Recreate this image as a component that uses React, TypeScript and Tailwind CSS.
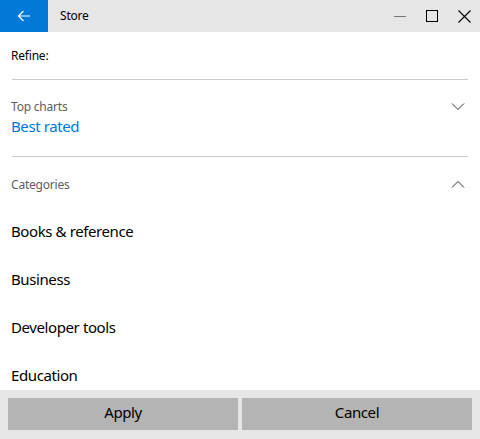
const font = "font-['Segoe_UI','Noto_Sans',sans-serif]";

const categories = ["Books & reference", "Business", "Developer tools", "Education"];

function Chevron({ up }: { up?: boolean }) {
  return (
    <svg width="14" height="8" viewBox="0 0 14 8" className="text-[#333]">
      <path
        d={up ? "M1 7.5L7 1.5L13 7.5" : "M1 0.5L7 6.5L13 0.5"}
        fill="none"
        stroke="currentColor"
        strokeWidth="1"
      />
    </svg>
  );
}

export default function App() {
  return (
    <div className={`${font} w-[480px] h-[439px] flex flex-col bg-white text-black overflow-hidden`}>
      <div className="h-8 flex items-center bg-[#e6e6e6] shrink-0">
        <button className="w-12 h-8 bg-[#0078d7] flex items-center justify-center">
          <svg width="14" height="12" viewBox="0 0 14 12">
            <path d="M13 6H1.5M6.5 1L1.5 6L6.5 11" fill="none" stroke="white" strokeWidth="1.2" />
          </svg>
        </button>
        <span className="ml-3 text-xs tracking-[-0.2px] -mt-px">Store</span>
        <div className="ml-auto flex">
          <div className="w-8 h-8 flex items-center justify-center">
            <div className="w-3 h-px bg-[#777]" />
          </div>
          <div className="w-8 h-8 flex items-center justify-center">
            <div className="w-3 h-3 border border-black" />
          </div>
          <div className="w-8 h-8 flex items-center justify-center">
            <svg width="13" height="13" viewBox="0 0 13 13">
              <path d="M0.5 0.5L12.5 12.5M12.5 0.5L0.5 12.5" stroke="black" strokeWidth="1.1" />
            </svg>
          </div>
        </div>
      </div>

      <div className="flex-1 overflow-hidden px-3">
        <div className="h-[47px] flex items-center -ml-px text-xs tracking-[-0.2px]">Refine:</div>
        <div className="h-px bg-[#cccccc]" />

        <div className="pt-[19px] pb-[20px] flex">
          <div className="-ml-px">
            <div className="text-xs leading-4 text-[#5d5d5d] tracking-[-0.2px]">Top charts</div>
            <div className="text-[15px] leading-5 mt-[1px] text-[#0078d7] tracking-[-0.4px]">Best rated</div>
          </div>
          <div className="ml-auto mr-[3px] mt-[4px]">
            <Chevron />
          </div>
        </div>
        <div className="h-px bg-[#cccccc]" />

        <div className="pt-5 flex items-center">
          <div className="-ml-px text-xs leading-4 text-[#5d5d5d] tracking-[-0.2px]">Categories</div>
          <div className="ml-auto mr-[3px] -mt-[2px]">
            <Chevron up />
          </div>
        </div>
        <div className="mt-[14px] flex flex-col">
          {categories.map((c) => (
            <div key={c} className="h-12 flex items-center -ml-px text-[15px] tracking-[-0.4px]">
              {c}
            </div>
          ))}
        </div>
      </div>

      <div className="h-[49px] shrink-0 bg-[#e6e6e6] px-2 pt-2 flex gap-1 items-start">
        <button className="flex-1 h-8 bg-[#b4b4b4] text-[15px] leading-5 pb-[5px] tracking-[-0.4px]">Apply</button>
        <button className="flex-1 h-8 bg-[#b4b4b4] text-[15px] leading-5 pb-[5px] tracking-[-0.4px]">Cancel</button>
      </div>
    </div>
  );
}
